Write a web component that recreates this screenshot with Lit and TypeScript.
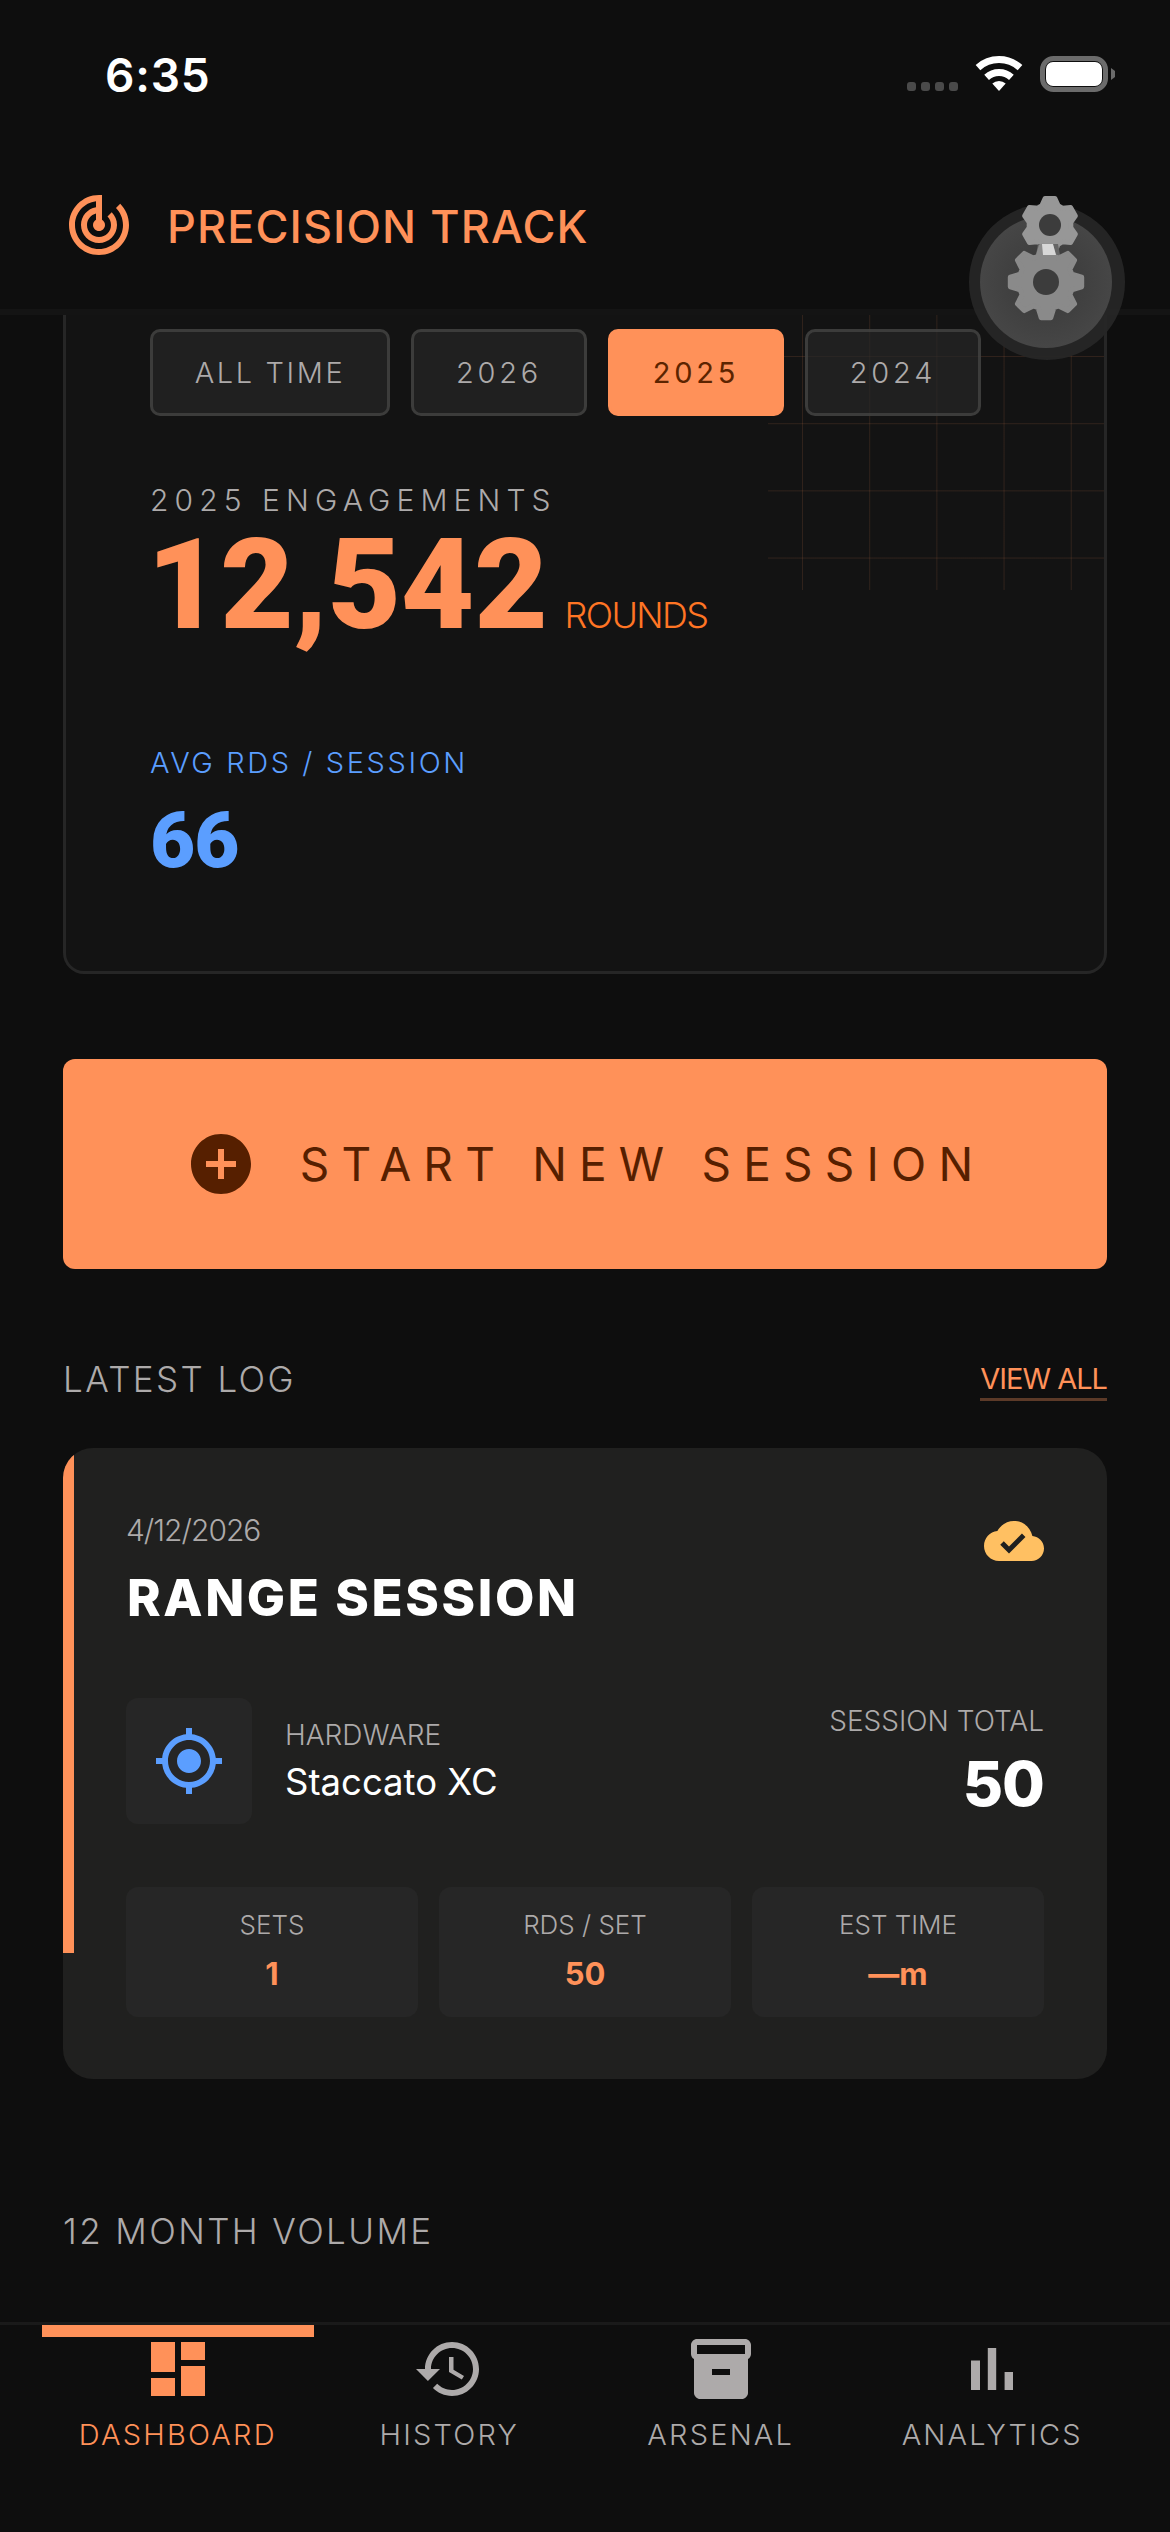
import { html, css, LitElement } from 'lit'
import { customElement } from 'lit/decorators.js'

// polygon outline for a cog, corners get rounded by the stroke
function gearPath(cx: number, cy: number, teeth: number, outer: number, root: number, start: number) {
  const step = (Math.PI * 2) / teeth
  const pts: string[] = []
  for (let i = 0; i < teeth; i++) {
    const a = start + i * step
    const pairs: [number, number][] = [
      [a - step * 0.38, root],
      [a - step * 0.17, outer],
      [a + step * 0.17, outer],
      [a + step * 0.38, root],
    ]
    for (const [ang, r] of pairs) {
      pts.push(`${(cx + Math.cos(ang) * r).toFixed(1)} ${(cy + Math.sin(ang) * r).toFixed(1)}`)
    }
  }
  return 'M' + pts.join('L') + 'Z'
}

const ICONS = {
  dashboard: 'M3 13h8V3H3v10zm0 8h8v-6H3v6zm10 0h8V11h-8v10zm0-18v6h8V3h-8z',
  history:
    'M13 3c-4.97 0-9 4.03-9 9H1l3.89 3.89.07.14L9 12H6c0-3.87 3.13-7 7-7s7 3.13 7 7-3.13 7-7 7c-1.93 0-3.68-.79-4.94-2.06l-1.42 1.42C8.27 19.99 10.51 21 13 21c4.97 0 9-4.03 9-9s-4.03-9-9-9zm-1 5v5l4.28 2.54.72-1.21-3.5-2.08V8H12z',
  arsenal:
    'M20 2H4c-1 0-2 .9-2 2v3.01c0 .72.43 1.34 1 1.69V20c0 1.1 1.1 2 2 2h14c.9 0 2-.9 2-2V8.7c.57-.35 1-.97 1-1.69V4c0-1.1-1-2-2-2zm-5 12H9v-2h6v2zm5-7H4V4h16v3z',
  analytics: 'M5 9.2h3V19H5zM10.6 5h2.8v14h-2.8zm5.6 8H19v6h-2.8z',
  track:
    'M19.07 4.93l-1.41 1.41C19.1 7.79 20 9.79 20 12c0 4.42-3.58 8-8 8s-8-3.58-8-8c0-4.08 3.05-7.44 7-7.93v2.02C8.16 6.57 6 9.03 6 12c0 3.31 2.69 6 6 6s6-2.69 6-6c0-1.66-.67-3.16-1.76-4.24l-1.41 1.41C15.55 9.9 16 10.9 16 12c0 2.21-1.79 4-4 4s-4-1.79-4-4c0-1.86 1.28-3.41 3-3.86v2.14c-.6.35-1 .98-1 1.72 0 1.1.9 2 2 2s2-.9 2-2c0-.74-.4-1.38-1-1.72V2h-1C6.48 2 2 6.48 2 12s4.48 10 10 10 10-4.48 10-10c0-2.76-1.12-5.26-2.93-7.07z',
  add: 'M12 2C6.48 2 2 6.48 2 12s4.48 10 10 10 10-4.48 10-10S17.52 2 12 2zm5 11h-4v4h-2v-4H7v-2h4V7h2v4h4v2z',
  cloud:
    'M19.35 10.04C18.67 6.59 15.64 4 12 4 9.11 4 6.6 5.64 5.35 8.04 2.34 8.36 0 10.91 0 14c0 3.31 2.69 6 6 6h13c2.76 0 5-2.24 5-5 0-2.64-2.05-4.78-4.65-4.96zM10 17l-3.5-3.5 1.41-1.41L10 14.17 15.18 9l1.41 1.41L10 17z',
  gps: 'M12 8c-2.21 0-4 1.79-4 4s1.79 4 4 4 4-1.79 4-4-1.79-4-4-4zm8.94 3c-.46-4.17-3.77-7.48-7.94-7.94V1h-2v2.06C6.83 3.52 3.52 6.83 3.06 11H1v2h2.06c.46 4.17 3.77 7.48 7.94 7.94V23h2v-2.06c4.17-.46 7.48-3.77 7.94-7.94H23v-2h-2.06zM12 19c-3.87 0-7-3.13-7-7s3.13-7 7-7 7 3.13 7 7-3.13 7-7 7z',
}

const YEARS = ['ALL TIME', '2026', '2025', '2024']
const TILES = [
  { label: 'SETS', value: '1' },
  { label: 'RDS / SET', value: '50' },
  { label: 'EST TIME', value: '—m' },
]
const TABS = [
  { label: 'DASHBOARD', icon: ICONS.dashboard, active: true },
  { label: 'HISTORY', icon: ICONS.history, active: false },
  { label: 'ARSENAL', icon: ICONS.arsenal, active: false },
  { label: 'ANALYTICS', icon: ICONS.analytics, active: false },
]

@customElement('app-root')
export class AppRoot extends LitElement {
  static styles = css`
    :host {
      display: flex;
      flex-direction: column;
      position: relative;
      width: 1170px;
      height: 2532px;
      overflow: hidden;
      background: #0e0e0e;
      color: #adaaaa;
      font-family: Inter, 'Liberation Sans', sans-serif;
      font-weight: 300;
    }
    svg { display: block; flex: none; fill: currentColor; }

    .top { border-bottom: 6px solid #141414; height: 315px; box-sizing: border-box; flex: none; }
    .status { height: 150px; display: flex; align-items: center; justify-content: space-between; padding: 0 50px 0 105px; }
    .clock { color: #fff; font-size: 46px; font-weight: 600; letter-spacing: 0.8px; line-height: 50px; }
    .brand { display: flex; align-items: center; height: 150px; padding-left: 63px; gap: 32px; color: #ff9159; }
    .brand-name { font-size: 45px; font-weight: 500; line-height: 54px; letter-spacing: 1.1px; padding-top: 3px; }

    main { flex: 1; padding: 0 63px; overflow: hidden; min-height: 0; }

    .hero { position: relative; background: #131313; border: 3px solid #262626; border-top: 0; border-radius: 0 0 21px 21px; padding: 14px 84px 92px; }
    .grid {
      position: absolute; left: 702px; top: 0; width: 336px; height: 275px;
      background-image:
        linear-gradient(rgba(255, 145, 89, 0.12) 1px, transparent 1px),
        linear-gradient(90deg, rgba(255, 145, 89, 0.12) 1px, transparent 1px);
      background-size: 67.2px 67.2px;
      background-position: 34px 41px;
    }
    .chips { position: relative; display: grid; grid-template-columns: 240px repeat(3, 176px); gap: 21px; }
    .chip {
      height: 87px; box-sizing: border-box; display: flex; align-items: center; justify-content: center;
      font-size: 29px; letter-spacing: 2.6px; border-radius: 10px;
      background: rgba(38, 38, 38, 0.7); border: 3px solid rgba(72, 72, 71, 0.7);
    }
    .chip.year { letter-spacing: 3.8px; }
    .chip.on { background: #ff9159; border-color: #ff9159; color: #5c2400; font-weight: 400; }
    .stat-label { position: relative; font-size: 30px; line-height: 40px; letter-spacing: 6.1px; margin-top: 64px; }
    .total { display: flex; align-items: baseline; gap: 17px; margin-top: 15px; color: #ff9159; }
    .total b { font-family: Roboto, Inter, sans-serif; font-size: 127px; font-weight: 900; line-height: 100px; letter-spacing: -0.3px; margin-left: -3px; }
    .total span { font-size: 36px; color: #ff7524; letter-spacing: -1.6px; }
    .avg-label { font-size: 29px; line-height: 40px; letter-spacing: 2.6px; color: #5b9eff; margin-top: 106px; }
    .avg { font-family: Roboto, Inter, sans-serif; font-size: 78px; font-weight: 900; line-height: 76px; letter-spacing: -1px; color: #5b9eff; margin-top: 20px; }

    .start {
      height: 210px; margin-top: 85px; background: #ff9159; border-radius: 12px; color: #561f00;
      display: flex; align-items: center; justify-content: center; gap: 43px;
    }
    .start span { font-size: 46px; font-weight: 400; letter-spacing: 12.2px; line-height: 50px; }

    .sec { font-size: 35px; line-height: 40px; letter-spacing: 2.4px; }
    .sec-head { display: flex; justify-content: space-between; align-items: flex-start; margin-top: 90px; }
    .view-all { font-size: 29px; line-height: 38px; letter-spacing: -1px; color: #ff9159; border-bottom: 3px solid #5c3a28; margin-top: 1px; font-weight: 400; }

    .log { position: relative; overflow: hidden; margin-top: 47px; background: #20201f; border-radius: 30px; padding: 64px 63px 62px; }
    .stripe { position: absolute; left: 0; top: 0; width: 11px; height: 505px; background: #ff9159; }
    .log-head { display: flex; justify-content: space-between; align-items: flex-start; }
    .date { font-size: 30px; line-height: 36px; letter-spacing: -1px; }
    .title { font-size: 51px; font-weight: 800; line-height: 56px; color: #fff; margin-top: 22px; margin-left: 1px; letter-spacing: 2.6px; }
    .cloud { color: #ffc062; margin-top: -1px; }

    .hw { display: flex; align-items: center; margin-top: 72px; }
    .hw-box { width: 126px; height: 126px; border-radius: 12px; background: #262626; display: flex; align-items: center; justify-content: center; color: #5b9eff; margin-right: 33px; }
    .hw-text { flex: 1; }
    .cap { font-size: 28px; line-height: 36px; }
    .hw-name { font-size: 36.5px; line-height: 46px; color: #fff; margin-top: 6px; font-weight: 400; }
    .hw-total { text-align: right; }
    .hw-total b { display: block; font-size: 62px; font-weight: 800; line-height: 70px; letter-spacing: -1px; color: #fff; margin-top: 10px; }

    .tiles { display: grid; grid-template-columns: repeat(3, 1fr); gap: 21px; margin-top: 63px; }
    .tile { height: 130px; box-sizing: border-box; padding-top: 21px; text-align: center; background: #262626; border-radius: 12px; }
    .tile .l { font-size: 26px; line-height: 34px; }
    .tile .v { font-size: 31px; font-weight: 700; line-height: 40px; margin-top: 12px; color: #ff9159; }

    .volume { margin-top: 132px; }

    nav { flex: none; height: 210px; box-sizing: border-box; border-top: 3px solid #1a1a1a; padding: 0 42px; display: flex; background: #0e0e0e; }
    .tab { position: relative; flex: 1; display: flex; flex-direction: column; align-items: center; padding-top: 8px; }
    .tab.on { color: #ff9159; }
    .tab.on::before { content: ''; position: absolute; left: 0; right: 0; top: 0; height: 12px; background: #ff9159; }
    .tab span { font-size: 29px; line-height: 40px; letter-spacing: 2.2px; margin-top: 10px; }

    .fab { position: absolute; left: 960px; top: 180px; }
  `

  private icon(d: string, size: number) {
    return html`<svg width=${size} height=${size} viewBox="0 0 24 24"><path d=${d} fill-rule="evenodd"></path></svg>`
  }

  private statusIcons() {
    return html`<svg width="220" height="50" viewBox="900 50 220 50">
      <rect x="907" y="82" width="9" height="9" rx="3" fill="#4a4a4a"></rect>
      <rect x="921" y="82" width="9" height="9" rx="3" fill="#4a4a4a"></rect>
      <rect x="935" y="82" width="9" height="9" rx="3" fill="#4a4a4a"></rect>
      <rect x="949" y="82" width="9" height="9" rx="3" fill="#4a4a4a"></rect>
      <path d="M978 67.6A31.5 31.5 0 0 1 1020 67.6M986.6 77.3A18.5 18.5 0 0 1 1011.4 77.3" fill="none" stroke="#fff" stroke-width="7"></path>
      <path d="M999 91L992.3 83.6A10 10 0 0 1 1005.7 83.6Z" fill="#fff"></path>
      <rect x="1042.5" y="58.5" width="63" height="31" rx="11" fill="none" stroke="#6b6b6b" stroke-width="5"></rect>
      <rect x="1046" y="62" width="56" height="24" rx="7" fill="#fff"></rect>
      <path d="M1111 68l4 3v6l-4 3z" fill="#6b6b6b"></path>
    </svg>`
  }

  private gears() {
    return html`<svg class="fab" width="180" height="190" viewBox="960 180 180 190">
      <defs>
        <radialGradient id="disc" cx="50%" cy="50%" r="50%">
          <stop offset="0%" stop-color="#383838"></stop>
          <stop offset="100%" stop-color="#464646"></stop>
        </radialGradient>
      </defs>
      <circle cx="1047" cy="282" r="78" fill="#262626" fill-opacity="0.94"></circle>
      <circle cx="1046" cy="282" r="66" fill="url(#disc)"></circle>
      <path d=${gearPath(1050, 225, 6, 27, 21, -Math.PI / 2)} fill="#979797" stroke="#979797" stroke-width="5" stroke-linejoin="round"></path>
      <circle cx="1050" cy="225" r="11" fill="#3c3c3c"></circle>
      <path d="M1038 244h20l2 11h-24z" fill="#666"></path>
      <path d=${gearPath(1046, 282, 8, 36, 27, -Math.PI / 2)} fill="#8a8a8a" stroke="#8a8a8a" stroke-width="5" stroke-linejoin="round"></path>
      <circle cx="1046" cy="282" r="13" fill="#3c3c3c"></circle>
      <path d="M1042 244h11l3 11h-13z" fill="#d8d8d8"></path>
    </svg>`
  }

  render() {
    return html`
      <div class="top">
        <div class="status">
          <div class="clock">6:35</div>
          ${this.statusIcons()}
        </div>
        <div class="brand">
          ${this.icon(ICONS.track, 72)}
          <div class="brand-name">PRECISION TRACK</div>
        </div>
      </div>

      <main>
        <section class="hero">
          <div class="grid"></div>
          <div class="chips">
            ${YEARS.map((y, i) => html`<div class="chip ${i > 0 ? 'year' : ''} ${y === '2025' ? 'on' : ''}">${y}</div>`)}
          </div>
          <div class="stat-label">2025 ENGAGEMENTS</div>
          <div class="total"><b>12,542</b><span>ROUNDS</span></div>
          <div class="avg-label">AVG RDS / SESSION</div>
          <div class="avg">66</div>
        </section>

        <div class="start">
          ${this.icon(ICONS.add, 72)}
          <span>START NEW SESSION</span>
        </div>

        <div class="sec-head">
          <div class="sec">LATEST LOG</div>
          <div class="view-all">VIEW ALL</div>
        </div>

        <section class="log">
          <div class="stripe"></div>
          <div class="log-head">
            <div>
              <div class="date">4/12/2026</div>
              <div class="title">RANGE SESSION</div>
            </div>
            <div class="cloud">${this.icon(ICONS.cloud, 60)}</div>
          </div>
          <div class="hw">
            <div class="hw-box">${this.icon(ICONS.gps, 72)}</div>
            <div class="hw-text">
              <div class="cap">HARDWARE</div>
              <div class="hw-name">Staccato XC</div>
            </div>
            <div class="hw-total">
              <div class="cap">SESSION TOTAL</div>
              <b>50</b>
            </div>
          </div>
          <div class="tiles">
            ${TILES.map((t) => html`<div class="tile"><div class="l">${t.label}</div><div class="v">${t.value}</div></div>`)}
          </div>
        </section>

        <div class="sec volume">12 MONTH VOLUME</div>
      </main>

      <nav>
        ${TABS.map((t) => html`<div class="tab ${t.active ? 'on' : ''}">${this.icon(t.icon, 72)}<span>${t.label}</span></div>`)}
      </nav>

      ${this.gears()}
    `
  }
}

declare global {
  interface HTMLElementTagNameMap {
    'app-root': AppRoot
  }
}
